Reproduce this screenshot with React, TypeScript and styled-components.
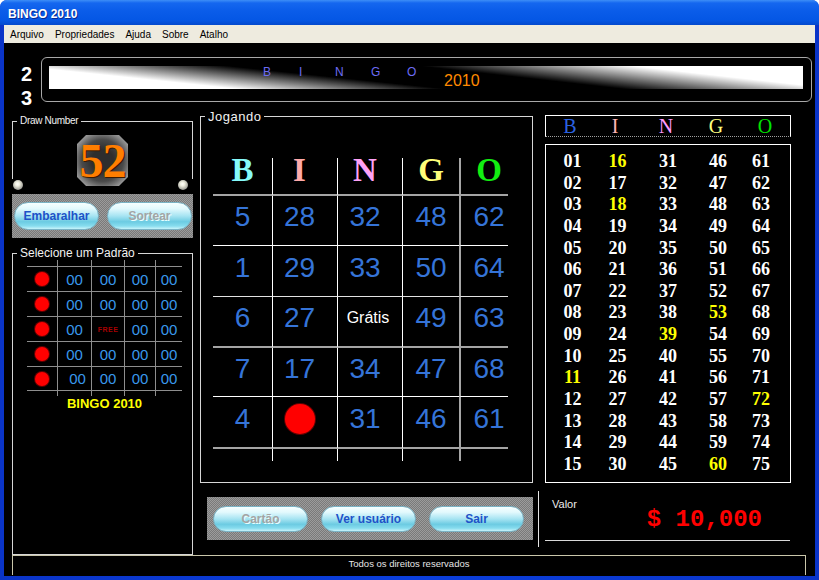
import React from 'react';
import styled, { createGlobalStyle } from 'styled-components';

const Global = createGlobalStyle`
  html, body { margin: 0; padding: 0; background: #ffffff; }
  body { font-family: "Liberation Sans", Arial, sans-serif; }
  * { box-sizing: border-box; }
`;

const Window = styled.div`
  width: 819px;
  height: 580px;
  display: flex;
  flex-direction: column;
  border-radius: 7px 7px 0 0;
  overflow: hidden;
  background: #0b3bd8;
`;

const TitleBar = styled.div`
  height: 25px;
  flex: none;
  display: flex;
  align-items: center;
  padding: 3px 0 0 8px;
  background: linear-gradient(#3d8ef7 0%, #1567ef 12%, #0a5ce9 45%, #0557e5 80%, #0449cd 100%);
  color: #ffffff;
  font-weight: bold;
  font-size: 12px;
  text-shadow: 1px 1px 0 #0a2a90;
`;

const Frame = styled.div`
  flex: 1;
  display: flex;
  flex-direction: column;
  padding: 0 4px 4px 4px;
  background: linear-gradient(90deg, #0a34c8, #0b3fdc 50%, #0a34c8);
`;

const MenuBar = styled.div`
  height: 18px;
  flex: none;
  display: flex;
  align-items: center;
  gap: 11px;
  padding-left: 6px;
  background: #eeebdf;
  font-size: 10px;
  color: #000000;
`;

const MenuItem = styled.span``;

const Content = styled.div`
  flex: 1;
  display: flex;
  flex-direction: column;
  background: #000000;
  padding: 14px 3px 0 8px;
`;

const BannerRow = styled.div`
  height: 45px;
  display: flex;
`;

const RowNums = styled.div`
  width: 29px;
  display: flex;
  flex-direction: column;
  align-items: center;
  padding-top: 5px;
  color: #ffffff;
  font-weight: bold;
  font-size: 20px;
  line-height: 24px;
`;

const BannerBox = styled.div`
  width: 771px;
  height: 45px;
  border: 1px solid #a8a8a8;
  border-radius: 6px;
  padding: 8px 0 0 7px;
`;

const BannerBar = styled.div`
  width: 754px;
  height: 23px;
  display: flex;
  padding-left: 214px;
  background:
    linear-gradient(6.4deg, rgba(255,255,255,0) 64px, #ffffff 88px),
    linear-gradient(186deg, #000000 60px, #ffffff 82px);
`;

const BannerLetter = styled.span`
  width: 36px;
  color: #6c6cf4;
  font-size: 12px;
  line-height: 12px;
`;

const BannerYear = styled.span`
  align-self: flex-end;
  margin-left: 1px;
  color: #ff8a00;
  font-size: 16px;
  line-height: 16px;
`;

const MainRow = styled.div`
  height: 444px;
  margin-top: 9px;
  display: flex;
`;

const LeftCol = styled.div`
  width: 181px;
  display: flex;
  flex-direction: column;
  padding-top: 4px;
`;

const Group = styled.fieldset<{ $open?: boolean }>`
  margin: 0;
  padding: 0;
  min-width: 0;
  border: 1px solid #d6d6d6;
  ${(p) => (p.$open ? 'border-bottom: none;' : '')}
`;

const Legend = styled.legend<{ $size: number; $lh: number; $ls?: number }>`
  margin-left: 4px;
  padding: 0 3px;
  color: #f2f2f2;
  font-size: ${(p) => p.$size}px;
  line-height: ${(p) => p.$lh}px;
  letter-spacing: ${(p) => p.$ls ?? 0}px;
`;

const DrawTile = styled.div`
  width: 51px;
  height: 51px;
  margin: 8px auto -7px auto;
  display: flex;
  align-items: center;
  justify-content: center;
  clip-path: polygon(9px 0, calc(100% - 9px) 0, 100% 9px, 100% calc(100% - 9px), calc(100% - 9px) 100%, 9px 100%, 0 calc(100% - 9px), 0 9px);
  background:
    radial-gradient(circle at 50% 50%, #2e2e2e 30%, #4a4a4a 58%, #8a8a8a 78%, #c4c4c4 100%);
  font-family: "Liberation Serif", "Times New Roman", serif;
  font-weight: bold;
  font-size: 48px;
  line-height: 51px;
  letter-spacing: -1px;
  color: #ff7e00;
  text-shadow: 1px 1px 0 #3a1a00;
`;

const ScrewRow = styled.div`
  height: 12px;
  display: flex;
  align-items: center;
  justify-content: space-between;
  padding: 0 5px 0 1px;
`;

const Screw = styled.span`
  width: 10px;
  height: 10px;
  border-radius: 50%;
  background: radial-gradient(circle at 45% 40%, #ffffff 0, #f0efe0 25%, #a8a8a0 65%, #505050 100%);
`;

const ButtonPanel = styled.div<{ $w: number; $h: number; $pl: number; $gap: number }>`
  width: ${(p) => p.$w}px;
  height: ${(p) => p.$h}px;
  display: flex;
  align-items: center;
  padding-left: ${(p) => p.$pl}px;
  gap: ${(p) => p.$gap}px;
  background-color: #8a8a8a;
  background-image: repeating-conic-gradient(#7a7a7a 0% 25%, #9c9c9c 0% 50%);
  background-size: 2px 2px;
`;

const PillButton = styled.div<{ $w: number; $h: number; $off?: boolean }>`
  width: ${(p) => p.$w}px;
  height: ${(p) => p.$h}px;
  border-radius: ${(p) => p.$h / 2}px;
  display: flex;
  align-items: center;
  justify-content: center;
  border: 1px solid #7ab2c4;
  background: linear-gradient(#f6ffff 0%, #e2f9fd 22%, #a6e4f2 50%, #6ccbe2 72%, #86dcee 88%, #c8f4fb 100%);
  font-size: 12px;
  font-weight: bold;
  color: ${(p) => (p.$off ? '#a4a4a4' : '#1d52c8')};
  text-shadow: ${(p) => (p.$off ? '1px 1px 0 #e8ffff' : 'none')};
`;

const PatternWrap = styled.div`
  width: 155px;
  margin-left: 14px;
  display: flex;
  flex-direction: column;
`;

const PatternGrid = styled.div`
  display: grid;
  grid-template-columns: 30px 34px 33px 31px 27px;
`;

const PCell = styled.div<{ $h: number; $left: boolean; $top: boolean; $bottom: boolean; $pl?: number }>`
  height: ${(p) => p.$h}px;
  display: flex;
  align-items: center;
  justify-content: center;
  padding-left: ${(p) => p.$pl ?? 0}px;
  border-left: ${(p) => (p.$left ? '1px solid #8e8e8e' : 'none')};
  border-top: ${(p) => (p.$top ? '1px solid #8e8e8e' : 'none')};
  border-bottom: ${(p) => (p.$bottom ? '1px solid #8e8e8e' : 'none')};
`;

const Zero = styled.span`
  color: #3998ec;
  font-size: 15px;
  line-height: 15px;
`;

const Free = styled.span`
  color: #a80000;
  font-size: 7px;
  font-weight: bold;
  letter-spacing: 0.5px;
`;

const Dot = styled.span<{ $d: number }>`
  width: ${(p) => p.$d}px;
  height: ${(p) => p.$d}px;
  border-radius: 50%;
  background: #ff0000;
  box-shadow: 0 0 0 1px rgba(160, 0, 0, 0.6);
`;

const PatternTitle = styled.div`
  text-align: center;
  color: #ffff00;
  font-weight: bold;
  font-size: 13px;
  line-height: 15px;
`;

const MidCol = styled.div`
  width: 333px;
  margin-left: 7px;
  display: flex;
  flex-direction: column;
`;

const CardGrid = styled.div`
  margin: 36px 0 0 12px;
  width: 295px;
  display: grid;
  grid-template-columns: 59px 65px 65px 57px 49px;
`;

const colBorders = ['none', '1px solid #ffffff', '1px solid #ffffff', '1px solid #ffffff', '2px solid #a6a6a6'];
const colPadL = [0, 0, 0, 0, 9];
const colPadR = [0, 11, 10, 0, 0];

const CardCell = styled.div<{ $h: number; $col: number; $line?: string; $pb: number }>`
  height: ${(p) => p.$h}px;
  display: flex;
  align-items: center;
  justify-content: center;
  border-left: ${(p) => colBorders[p.$col]};
  border-bottom: ${(p) => p.$line ?? 'none'};
  padding: 0 ${(p) => colPadR[p.$col]}px ${(p) => p.$pb}px ${(p) => colPadL[p.$col]}px;
`;

const CardLetter = styled.span<{ $c: string }>`
  font-family: "Liberation Serif", "Times New Roman", serif;
  font-weight: bold;
  font-size: 33px;
  color: ${(p) => p.$c};
`;

const CardNum = styled.span`
  font-size: 28px;
  color: #3574d8;
`;

const FreeText = styled.span`
  font-size: 16px;
  color: #ffffff;
  margin-left: 6px;
`;

const RightCol = styled.div`
  width: 253px;
  margin-left: 5px;
  padding-top: 4px;
  display: flex;
  flex-direction: column;
`;

const BoardHeader = styled.div`
  margin-left: 7px;
  width: 246px;
  height: 22px;
  border: 1px solid #ffffff;
  border-bottom: 1px dotted #a0a0a0;
  display: grid;
  grid-template-columns: 40px 50px 52px 48px 50px;
  padding-left: 4px;
  align-items: center;
`;

const BoardLetter = styled.span<{ $c: string }>`
  text-align: center;
  font-family: "Liberation Serif", "Times New Roman", serif;
  font-size: 20px;
  line-height: 20px;
  color: ${(p) => p.$c};
`;

const Board = styled.div`
  margin: 7px 0 0 7px;
  width: 246px;
  height: 339px;
  border: 1px solid #ffffff;
  padding: 6px 0 0 4px;
  display: grid;
  grid-template-columns: 45px 45px 56px 44px 42px;
  grid-template-rows: repeat(15, 21.64px);
  grid-auto-flow: column;
`;

const BoardNum = styled.span<{ $hit: boolean }>`
  text-align: center;
  font-family: "Liberation Serif", "Times New Roman", serif;
  font-weight: bold;
  font-size: 18px;
  line-height: 21.64px;
  color: ${(p) => (p.$hit ? '#ffff00' : '#ffffff')};
`;

const ValorArea = styled.div`
  margin-top: 8px;
  height: 56px;
  border-left: 1px solid #e6e6e6;
`;

const ValorBox = styled.div`
  margin-left: 6px;
  width: 245px;
  height: 50px;
  border-bottom: 1px solid #d8d8d8;
  display: flex;
  flex-direction: column;
  padding-top: 7px;
`;

const ValorLabel = styled.span`
  padding-left: 7px;
  font-size: 11px;
  line-height: 13px;
  color: #ececec;
`;

const ValorAmount = styled.span`
  margin-top: -3px;
  padding-right: 28px;
  text-align: right;
  font-family: "Liberation Mono", "Courier New", monospace;
  font-weight: bold;
  font-size: 24px;
  line-height: 24px;
  color: #ff0000;
`;

const Footer = styled.div`
  width: 794px;
  height: 20px;
  border: 1px solid #c9c6aa;
  border-bottom: none;
  text-align: center;
  font-size: 9.5px;
  line-height: 13px;
  padding-top: 1px;
  color: #e6e6e6;
`;

const patternRows = [0, 1, 2, 3, 4];
const cardRows: (number | 'free' | 'dot')[][] = [
  [5, 28, 32, 48, 62],
  [1, 29, 33, 50, 64],
  [6, 27, 'free', 49, 63],
  [7, 17, 34, 47, 68],
  [4, 'dot', 31, 46, 61],
];
const rowSpec = [
  { h: 50, line: '1px solid #ffffff' },
  { h: 51, line: '1px solid #e2e2e2' },
  { h: 51, line: '2px solid #a4a4a4' },
  { h: 49, line: '1px solid #ffffff' },
  { h: 52, line: '2px solid #a4a4a4' },
];
const cardLetters = [
  { l: 'B', c: '#86fafa' },
  { l: 'I', c: '#ffaaaa' },
  { l: 'N', c: '#ffa2f6' },
  { l: 'G', c: '#ffff7a' },
  { l: 'O', c: '#12ee12' },
];
const boardLetters = [
  { l: 'B', c: '#2c62e0' },
  { l: 'I', c: '#ffb4b4' },
  { l: 'N', c: '#ff9aff' },
  { l: 'G', c: '#ffff80' },
  { l: 'O', c: '#00e400' },
];
const hits = new Set([16, 18, 53, 39, 11, 72, 60]);
const cols5 = [0, 1, 2, 3, 4];

export default function App() {
  return (
    <>
      <Global />
      <Window>
        <TitleBar>BINGO 2010</TitleBar>
        <Frame>
          <MenuBar>
            {['Arquivo', 'Propriedades', 'Ajuda', 'Sobre', 'Atalho'].map((m) => (
              <MenuItem key={m}>{m}</MenuItem>
            ))}
          </MenuBar>
          <Content>
            <BannerRow>
              <RowNums>
                <span>2</span>
                <span>3</span>
              </RowNums>
              <BannerBox>
                <BannerBar>
                  {['B', 'I', 'N', 'G', 'O'].map((l) => (
                    <BannerLetter key={l}>{l}</BannerLetter>
                  ))}
                  <BannerYear>2010</BannerYear>
                </BannerBar>
              </BannerBox>
            </BannerRow>

            <MainRow>
              <LeftCol>
                <Group $open>
                  <Legend $size={10} $lh={12} $ls={-0.3}>Draw Number</Legend>
                  <DrawTile>52</DrawTile>
                </Group>
                <ScrewRow>
                  <Screw />
                  <Screw />
                </ScrewRow>
                <ButtonPanel $w={181} $h={44} $pl={2} $gap={8} style={{ marginTop: 3 }}>
                  <PillButton $w={85} $h={28}>Embaralhar</PillButton>
                  <PillButton $w={85} $h={28} $off>Sortear</PillButton>
                </ButtonPanel>
                <Group style={{ marginTop: 8, flex: 1 }}>
                  <Legend $size={12} $lh={14}>Selecione um Padrão</Legend>
                  <PatternWrap>
                    <PatternGrid>
                      {cols5.map((c) => (
                        <PCell key={`s${c}`} $h={6} $left={c > 0} $top={false} $bottom={false} />
                      ))}
                      {patternRows.map((r) =>
                        cols5.map((c) => (
                          <PCell key={`${r}-${c}`} $h={25} $left={c > 0} $top $bottom={r === 4} $pl={r === 4 && c === 1 ? 6 : 0}>
                            {c === 0 ? <Dot $d={14} /> : r === 2 && c === 2 ? <Free>FREE</Free> : <Zero>00</Zero>}
                          </PCell>
                        ))
                      )}
                      {cols5.map((c) => (
                        <PCell key={`e${c}`} $h={5} $left={c > 0} $top={false} $bottom={false} />
                      ))}
                    </PatternGrid>
                    <PatternTitle>BINGO 2010</PatternTitle>
                  </PatternWrap>
                </Group>
              </LeftCol>

              <MidCol>
                <Group style={{ height: 372 }}>
                  <Legend $size={13} $lh={11} $ls={0.5}>Jogando</Legend>
                  <CardGrid>
                    {cardLetters.map((h, c) => (
                      <CardCell key={h.l} $h={38} $col={c} $line="2px solid #a4a4a4" $pb={11}>
                        <CardLetter $c={h.c}>{h.l}</CardLetter>
                      </CardCell>
                    ))}
                    {cardRows.map((row, r) =>
                      row.map((v, c) => (
                        <CardCell key={`${r}-${c}`} $h={rowSpec[r].h} $col={c} $line={rowSpec[r].line} $pb={7}>
                          {v === 'dot' ? <Dot $d={30} /> : v === 'free' ? <FreeText>Grátis</FreeText> : <CardNum>{v}</CardNum>}
                        </CardCell>
                      ))
                    )}
                    {cols5.map((c) => (
                      <CardCell key={`t${c}`} $h={12} $col={c} $pb={0} />
                    ))}
                  </CardGrid>
                </Group>
                <ButtonPanel $w={326} $h={43} $pl={6} $gap={13} style={{ marginTop: 14, marginLeft: 7 }}>
                  <PillButton $w={95} $h={26} $off>Cartão</PillButton>
                  <PillButton $w={95} $h={26}>Ver usuário</PillButton>
                  <PillButton $w={95} $h={26}>Sair</PillButton>
                </ButtonPanel>
              </MidCol>

              <RightCol>
                <BoardHeader>
                  {boardLetters.map((h) => (
                    <BoardLetter key={h.l} $c={h.c}>{h.l}</BoardLetter>
                  ))}
                </BoardHeader>
                <Board>
                  {Array.from({ length: 75 }, (_, i) => i + 1).map((n) => (
                    <BoardNum key={n} $hit={hits.has(n)}>
                      {String(n).padStart(2, '0')}
                    </BoardNum>
                  ))}
                </Board>
                <ValorArea>
                  <ValorBox>
                    <ValorLabel>Valor</ValorLabel>
                    <ValorAmount>$ 10,000</ValorAmount>
                  </ValorBox>
                </ValorArea>
              </RightCol>
            </MainRow>

            <Footer>Todos os direitos reservados</Footer>
          </Content>
        </Frame>
      </Window>
    </>
  );
}
